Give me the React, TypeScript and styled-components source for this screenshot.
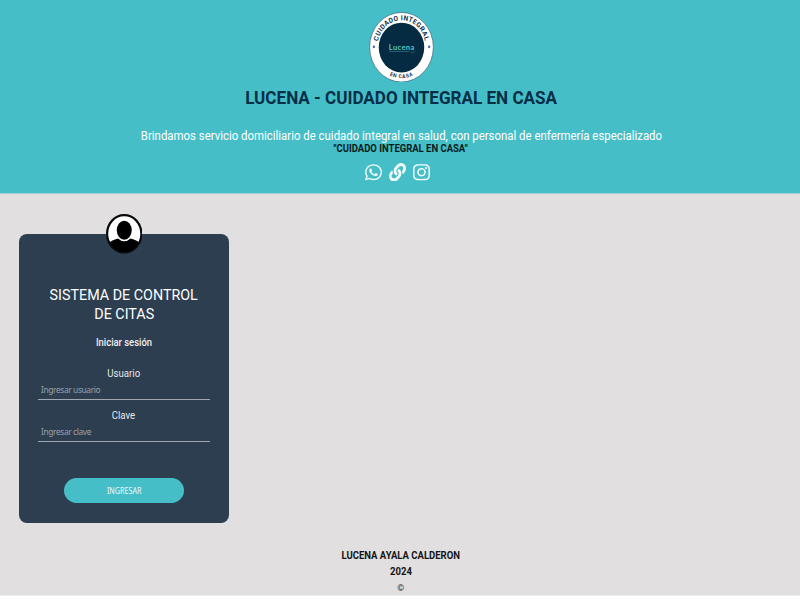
import React from "react";
import styled, { createGlobalStyle } from "styled-components";
import { FaWhatsapp, FaLink, FaInstagram } from "react-icons/fa";

const GlobalStyle = createGlobalStyle`
  * { box-sizing: border-box; }
  body { margin: 0; background: #fff; font-family: Roboto, sans-serif; overflow: hidden; }
`;

const Page = styled.div`
  width: 800px;
  height: 596px;
  display: flex;
  flex-direction: column;
  background: #e1dfe0;
  border-bottom: 1px solid #efeeee;
`;

const Header = styled.header`
  height: 194px;
  padding: 11px 0 0 2px;
  display: flex;
  flex-direction: column;
  align-items: center;
  background: #46bec8;
  border-bottom: 1px solid #9dd0d5;
`;

const Logo = styled.svg`
  display: block;
  width: 65px;
  height: 71px;
  flex: none;
`;

/* One line of condensed text. */
const Line = styled.div<{
  $size: number; $height: number; $top?: number; $squeeze?: number;
  $weight?: number; $color?: string; $font?: string;
}>`
  flex: none;
  width: max-content;
  margin: ${p => p.$top ?? 0}px 0 0;
  font-family: ${p => p.$font ?? "Roboto"}, sans-serif;
  font-size: ${p => p.$size}px;
  line-height: ${p => p.$height}px;
  height: ${p => p.$height}px;
  font-weight: ${p => p.$weight ?? 400};
  color: ${p => p.$color ?? "#fff"};
  white-space: nowrap;
  transform: scaleX(${p => p.$squeeze ?? 0.93});
`;

const Socials = styled.nav`
  display: flex;
  align-items: center;
  justify-content: center;
  gap: 7px;
  height: 20px;
  margin-top: 7.5px;
  color: #f2fdfd;
  padding-right: 7px;

  svg { display: block; width: 17px; height: 18.5px; }
`;

const Main = styled.main`
  height: 346px;
  padding: 40.3px 0 0 19px;
`;

const Card = styled.form`
  position: relative;
  width: 209.6px;
  height: 289.2px;
  padding: 52px 19px 0;
  display: flex;
  flex-direction: column;
  align-items: center;
  border-radius: 8px;
  background: #2d3e50;
`;

const Avatar = styled.svg`
  position: absolute;
  top: -19.8px;
  left: 86.5px;
  width: 36.5px;
  height: 39.5px;
`;

const Field = styled.input`
  flex: none;
  display: block;
  width: 171.6px;
  height: 19px;
  padding: 0 3px 1px;
  border: 0;
  border-bottom: 1.5px solid #a0a8b1;
  background: transparent;
  font: 8.4px "Noto Sans", sans-serif;
  letter-spacing: -0.38px;
  color: #fff;
  outline: 0;

  &::placeholder { color: #98a1aa; opacity: 1; }
`;

const Submit = styled.button`
  flex: none;
  display: flex;
  align-items: center;
  justify-content: center;
  width: 120.5px;
  height: 25px;
  margin-top: 35.8px;
  padding: 0;
  border: 0;
  border-radius: 12.5px;
  background: #46bec8;
`;

const Footer = styled.footer`
  display: flex;
  flex-direction: column;
  align-items: center;
  padding-top: 8px;
  padding-left: 2px;
`;

export default function App() {
  return (
    <>
      <GlobalStyle />
      <Page>
        <Header>
          <Logo viewBox="0 0 100 100" preserveAspectRatio="none">
            <defs>
              <path id="arcTop" d="M12 50 A38 38 0 0 1 88 50" />
              <path id="arcBottom" d="M6.5 50 A43.5 43.5 0 0 0 93.5 50" />
            </defs>
            <circle cx="50" cy="51" r="49" fill="#fff" stroke="#40647a" strokeWidth="1" />
            <circle cx="50" cy="51.5" r="35" fill="#052b42" />
            <g fill="#102f48" fontFamily="Roboto, sans-serif" fontWeight="700" textAnchor="middle">
              <text fontSize="10" letterSpacing="0.75" dy="1"><textPath href="#arcTop" startOffset="50%">CUIDADO INTEGRAL</textPath></text>
              <text fontSize="7.5" letterSpacing="0.8" dy="1"><textPath href="#arcBottom" startOffset="50%">EN CASA</textPath></text>
            </g>
            <circle cx="7.5" cy="50.5" r="1.8" fill="#4164ad" />
            <circle cx="92.5" cy="50.5" r="1.8" fill="#4164ad" />
            <text x="50" y="54.5" fontSize="11.5" fontWeight="700" textAnchor="middle" textLength="39" fill="#55c6cb" fontFamily="Lato, sans-serif">Lucena</text>
            <path d="M31 57 H62 M64 58 q3 3 6-2" stroke="#347e8b" strokeWidth="1" fill="none" />
          </Logo>
          <Line as="h1" $top={5.5} $size={18.2} $height={20} $squeeze={0.939} $weight={700} $color="#072f47">LUCENA - CUIDADO INTEGRAL EN CASA</Line>
          <Line $top={21} $size={12.5} $height={14} $squeeze={0.913}>Brindamos servicio domiciliario de cuidado integral en salud, con personal de enfermería especializado</Line>
          <Line $top={-0.9} $size={10.4} $height={13} $squeeze={0.912} $weight={700} $color="#071b20">"CUIDADO INTEGRAL EN CASA"</Line>
          <Socials>
            <FaWhatsapp preserveAspectRatio="none" />
            <FaLink preserveAspectRatio="none" />
            <FaInstagram preserveAspectRatio="none" />
          </Socials>
        </Header>
        <Main>
          <Card>
            <Avatar viewBox="0 0 100 100" preserveAspectRatio="none">
              <defs><clipPath id="face"><circle cx="50" cy="50" r="46" /></clipPath></defs>
              <circle cx="50" cy="50" r="47" fill="#fff" stroke="#080a0b" strokeWidth="6" />
              <g clipPath="url(#face)">
                <path d="M2 78 Q14 66 33 62 Q41 69 50 69 Q59 69 67 62 Q86 66 98 78 V100 H2Z" fill="#000" />
              </g>
              <ellipse cx="50" cy="41" rx="23" ry="27" fill="#fff" />
              <ellipse cx="50" cy="41" rx="20.5" ry="24" fill="#000" />
            </Avatar>
            <Line $size={15.4} $height={18.6}>SISTEMA DE CONTROL</Line>
            <Line $size={15.4} $height={18.6}>DE CITAS</Line>
            <Line $top={12} $size={10.4} $height={15} $squeeze={0.905} $weight={500} $color="#eef0f2">Iniciar sesión</Line>
            <Line $top={16} $size={11} $height={15} $squeeze={0.875} $color="#e4e7ea">Usuario</Line>
            <Field placeholder="Ingresar usuario" />
            <Line $top={7.9} $size={11} $height={15} $squeeze={0.875} $color="#e4e7ea">Clave</Line>
            <Field type="password" placeholder="Ingresar clave" />
            <Submit type="button"><Line as="span" $size={8} $height={12} $squeeze={0.9} $font='"Noto Sans"' $color="#e9fafa">INGRESAR</Line></Submit>
          </Card>
        </Main>
        <Footer>
          <Line $size={10.4} $height={16.4} $squeeze={0.915} $weight={700} $color="#151515">LUCENA AYALA CALDERON</Line>
          <Line $size={10.4} $height={16.4} $squeeze={0.915} $weight={700} $color="#151515">2024</Line>
          <Line $size={9.5} $height={14.4} $weight={500} $color="#333">©</Line>
        </Footer>
      </Page>
    </>
  );
}
